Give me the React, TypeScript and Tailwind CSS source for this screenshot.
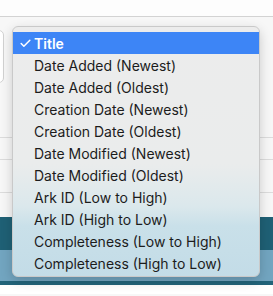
import { Check } from "lucide-react";

const options = [
  "Title",
  "Date Added (Newest)",
  "Date Added (Oldest)",
  "Creation Date (Newest)",
  "Creation Date (Oldest)",
  "Date Modified (Newest)",
  "Date Modified (Oldest)",
  "Ark ID (Low to High)",
  "Ark ID (High to Low)",
  "Completeness (Low to High)",
  "Completeness (High to Low)",
];

const SortMenu = ({ selected }: { selected: string }) => (
  <div className="absolute left-[12px] top-[26px] w-[248px] rounded-[6px] border border-[#c9c9c9] bg-[linear-gradient(to_bottom,#ececec_0%,#eaecec_55%,#dbe8ec_72%,#c9e0e9_80%,#c3dce7_100%)] pt-[5px] pb-[2px] shadow-[0_4px_12px_rgba(0,0,0,0.18)]">
    {options.map((opt) => {
      const active = opt === selected;
      return (
        <div
          key={opt}
          className={`flex h-[22px] items-center text-[14px] ${
            active ? "bg-[#3d85f6] text-white" : "text-[#1c1c1c]"
          }`}
        >
          <span className="flex w-[21px] justify-end pr-[2px]">
            {active && <Check size={13} strokeWidth={2.75} />}
          </span>
          <span className={active ? "font-semibold" : ""}>{opt}</span>
        </div>
      );
    })}
  </div>
);

export default function App() {
  return (
    <div
      className="relative h-[296px] w-[273px] overflow-hidden bg-[#f7f7f7]"
      style={{ fontFamily: "Inter, 'Liberation Sans', sans-serif" }}
    >
      <div className="flex flex-col">
        <div className="h-[17px] border-b border-[#d3d3d3] bg-[#fdfdfd]" />
        <div className="flex h-[120px] pt-[13px]">
          <div className="-ml-[20px] h-[53px] w-[24px] rounded-[5px] border border-[#d2d2d2] bg-white" />
        </div>
        <div className="h-[22px] border-t border-[#dcdcdc]" />
        <div className="h-[33px] border-t border-[#dcdcdc]" />
        <div className="h-[25px] border-t border-[#dcdcdc]" />
        <div className="h-[33px] bg-[#1f6075]" />
        <div className="h-[31px] bg-[#72a5c0]" />
        <div className="h-[4px] bg-[#22647a]" />
        <div className="h-[9px] bg-white" />
      </div>
      <SortMenu selected="Title" />
    </div>
  );
}
